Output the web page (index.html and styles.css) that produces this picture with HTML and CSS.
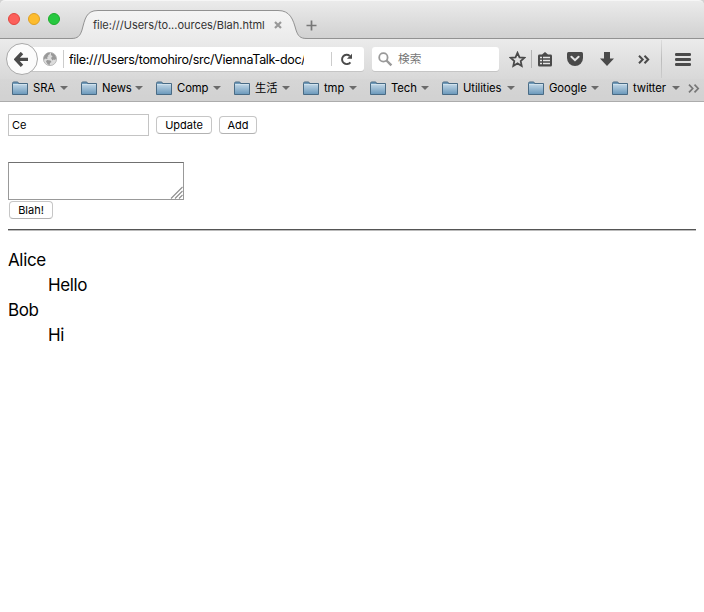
FILE: index.html
```html
<!DOCTYPE html>
<html lang="ja">
<head>
<meta charset="utf-8">
<title>Blah</title>
<link rel="stylesheet" href="styles.css">
</head>
<body>
<svg class="defs" width="0" height="0" aria-hidden="true">
  <defs>
    <linearGradient id="folderFill" x1="0" y1="0" x2="0" y2="1"><stop offset="0" stop-color="#b9d1e2"/><stop offset="1" stop-color="#6d9abc"/></linearGradient>
    <linearGradient id="tabFill" x1="0" y1="0" x2="0" y2="1"><stop offset="0" stop-color="#f5f5f5"/><stop offset="1" stop-color="#ebebeb"/></linearGradient>
    <symbol id="folder" viewBox="0 0 16 15">
      <path d="M.5 2.5Q.5 1 1.8 1H5.2Q6.5 1 6.5 2.5H15.5V13.5H.5Z" fill="#6f9aba" stroke="#496b85"/>
      <path d="M1 4H15V13H1Z" fill="url(#folderFill)"/>
      <path d="M1 3.5H15" stroke="#d0e1ec" stroke-width="1"/>
    </symbol>
  </defs>
</svg>
<header class="chrome">
  <div class="tabstrip">
    <div class="lights"><i class="red"></i><i class="yellow"></i><i class="green"></i></div>
    <div class="tab">
      <svg class="tab-shape" width="236" height="30" viewBox="0 0 236 30"><path d="M0 28.5C7 28.5 9 26 11 20C14 9 15 .5 27 .5H207C219 .5 222 9 225 20C227 26 229 28.5 236 28.5V30H0Z" fill="url(#tabFill)"/><path d="M0 28.5C7 28.5 9 26 11 20C14 9 15 .5 27 .5H207C219 .5 222 9 225 20C227 26 229 28.5 236 28.5" fill="none" stroke="#929292"/></svg>
      <span class="tab-title">file:///Users/to...ources/Blah.html</span>
      <svg class="tab-close" width="8" height="8" viewBox="0 0 8 8"><path d="M1 1L7 7M7 1L1 7" stroke="#999" stroke-width="2.2"/></svg>
    </div>
    <svg class="newtab" width="11" height="11" viewBox="0 0 11 11"><path d="M5.5 .5V10.5M.5 5.5H10.5" stroke="#777" stroke-width="1.7"/></svg>
  </div>
  <div class="navbar">
    <div class="back"><svg width="15" height="15" viewBox="0 0 15 15"><path d="M8 1L2 7.4L8 13.8M2 7.4H14" fill="none" stroke="#4a4a4a" stroke-width="3.4"/></svg></div>
    <div class="urlbar">
      <svg class="globe" width="14" height="14" viewBox="0 0 14 14"><circle cx="7" cy="7" r="6.6" fill="#dcdcdc" stroke="#b0b0b0" stroke-width=".8"/><path d="M.6 6C1.5 3 3.5 1 6.5 .6L7 2L5 3.2L5.5 4.2L4 5L4.8 6.2L3.5 7L2 6.5L1 8ZM8 .7C11 1.2 13 3.5 13.3 6.5L12 8L10.5 7.5L9.5 8.5L8 6L9.5 4.5L8 3ZM4 8L7.5 8.5L8.5 10L7 11L6.5 13.2L4.5 12L3 9.5Z" fill="#999"/></svg>
      <div class="url"><span>file:///Users/tomohiro/src/ViennaTalk-doc/</span></div>
      <div class="reload"><svg width="13" height="13" viewBox="0 0 12 12"><path d="M9.6 8.6A4.3 4.3 0 1 1 9 2.7" fill="none" stroke="#4a4a4a" stroke-width="1.8"/><path d="M11.1 .6V5.3H6.4Z" fill="#4a4a4a"/></svg></div>
    </div>
    <div class="search">
      <svg width="15" height="15" viewBox="0 0 15 15"><circle cx="5.4" cy="5.4" r="4.2" fill="none" stroke="#999" stroke-width="1.8"/><path d="M8.5 8.5L13.4 13.4" stroke="#999" stroke-width="2.4"/></svg>
      <span>検索</span>
    </div>
    <div class="tools">
      <svg class="t-star" width="17" height="17" viewBox="0 0 17 17"><path d="M8.5 1.8L10.5 6.3L15.3 6.8L11.7 10.1L12.7 15L8.5 12.4L4.3 15L5.3 10.1L1.7 6.8L6.5 6.3Z" fill="none" stroke="#4a4a4a" stroke-width="1.8"/></svg>
      <i class="rule"></i>
      <svg class="t-list" width="14" height="15" viewBox="0 0 14 15"><path d="M7 0L10 2.6H12.5Q14 2.6 14 4V13Q14 14.5 12.5 14.5H1.5Q0 14.5 0 13V4Q0 2.6 1.5 2.6H4Z" fill="#4a4a4a"/><path d="M2 5.5H4M5 5.5H12M2 8.5H4M5 8.5H12M2 11.5H4M5 11.5H12" stroke="#e4e4e4" stroke-width="1.3"/></svg>
      <svg class="t-pocket" width="16" height="14" viewBox="0 0 16 14"><path d="M1.5 0H14.5Q16 0 16 1.5V6A8 8 0 0 1 0 6V1.5Q0 0 1.5 0Z" fill="#4a4a4a"/><path d="M4.4 4.8L8 8.2L11.6 4.8" fill="none" stroke="#e4e4e4" stroke-width="2" stroke-linecap="round"/></svg>
      <svg class="t-down" width="14" height="14" viewBox="0 0 14 14"><path d="M4 0H10V6.5H14L7 14L0 6.5H4Z" fill="#4a4a4a"/></svg>
      <svg class="t-more" width="12" height="9" viewBox="0 0 12 9"><path d="M1 .7L4.7 4.5L1 8.3M6.5 .7L10.2 4.5L6.5 8.3" fill="none" stroke="#4a4a4a" stroke-width="2"/></svg>
      <i class="rule tall"></i>
      <svg class="t-menu" width="16" height="13" viewBox="0 0 16 13"><path d="M1.3 1.5H14.7M1.3 6.5H14.7M1.3 11.5H14.7" stroke="#4a4a4a" stroke-width="2.8" stroke-linecap="round"/></svg>
    </div>
  </div>
  <nav class="bookmarks">
    <div class="bm"><svg><use href="#folder"/></svg><span>SRA</span></div>
    <div class="bm"><svg><use href="#folder"/></svg><span>News</span></div>
    <div class="bm"><svg><use href="#folder"/></svg><span>Comp</span></div>
    <div class="bm"><svg><use href="#folder"/></svg><span>生活</span></div>
    <div class="bm"><svg><use href="#folder"/></svg><span>tmp</span></div>
    <div class="bm"><svg><use href="#folder"/></svg><span>Tech</span></div>
    <div class="bm"><svg><use href="#folder"/></svg><span>Utilities</span></div>
    <div class="bm"><svg><use href="#folder"/></svg><span>Google</span></div>
    <div class="bm"><svg><use href="#folder"/></svg><span>twitter</span></div>
    <svg class="overflow" width="12" height="9" viewBox="0 0 12 9"><path d="M1 .7L4.7 4.5L1 8.3M6.5 .7L10.2 4.5L6.5 8.3" fill="none" stroke="#777" stroke-width="1.7"/></svg>
  </nav>
</header>
<main>
  <div class="row"><input class="name" type="text" value="Ce"><button class="update">Update</button><button class="add">Add</button></div>
  <div class="message"><svg width="13" height="13" viewBox="0 0 13 13"><path d="M1 12.5L12.5 1M5 12.5L12.5 5M9 12.5L12.5 9" stroke="#8f8f8f" stroke-width="1.1"/></svg></div>
  <button class="blah">Blah!</button>
  <hr>
  <dl><dt>Alice</dt><dd>Hello</dd><dt>Bob</dt><dd>Hi</dd></dl>
</main>
</body>
</html>
```
FILE: styles.css
```css
* { box-sizing: border-box; }
body { margin: 0; width: 704px; height: 612px; overflow: hidden; background: #fff; color: #000; font-family: Inter, "Noto Sans CJK JP", sans-serif; }
svg { display: block; flex: none; }
.defs { position: absolute; }
.chrome { height: 102px; border-bottom: 1px solid #acacac; background: #d2d2d2; }
.tabstrip { height: 39px; display: flex; align-items: flex-start; background: linear-gradient(#ebebeb, #d1d1d1); border-top: 1px solid #f6f6f6; border-bottom: 1px solid #929292; border-radius: 5px 5px 0 0; }
.lights { display: flex; gap: 8px; padding: 12px 0 0 8px; width: 72px; }
.lights i { width: 12px; height: 12px; border-radius: 50%; border: 1px solid; }
.lights .red { background: #fc605b; border-color: #e2463f; }
.lights .yellow { background: #fdbc2e; border-color: #dfa023; }
.lights .green { background: #27c840; border-color: #1dad2c; }
.tab { position: relative; width: 233px; height: 30px; margin-top: 9px; display: flex; align-items: center; padding-left: 21px; }
.tab-shape { position: absolute; left: -1px; top: 0; }
.tab-title { position: relative; width: 180px; font-size: 11px; line-height: 14px; letter-spacing: -.02px; white-space: nowrap; color: #333; }
.tab-close { position: relative; margin-left: 1px; }
.newtab { margin: 19px 0 0 1px; }
.navbar { height: 40px; display: flex; align-items: center; background: linear-gradient(#ebebeb, #d8d8d8); padding-left: 6px; }
.back { position: relative; z-index: 1; width: 32px; height: 32px; flex: none; border: 1px solid #a9a9a9; border-radius: 50%; background: #fbfbfb; display: flex; align-items: center; padding-left: 7px; }
.urlbar { width: 334px; height: 24px; margin-left: -8px; flex: none; display: flex; align-items: center; background: #fff; border-radius: 0 3px 3px 0; padding-left: 13px; box-shadow: 0 1px #c5c5c5; }
.globe { margin-right: 6px; }
.url { width: 268px; height: 18px; padding-left: 5px; border-left: 1px solid #ccc; }
.url span { display: block; width: 235px; overflow: hidden; font-size: 12.5px; line-height: 19px; white-space: nowrap; letter-spacing: -.31px; }
.reload { height: 14px; padding-left: 8px; border-left: 1px solid #ccc; display: flex; align-items: center; }
.search { width: 127px; height: 24px; flex: none; margin-left: 8px; display: flex; align-items: center; gap: 5px; padding-left: 6px; background: #fff; border-radius: 3px; box-shadow: 0 1px #c5c5c5; font-size: 11.7px; line-height: 18px; color: #777; }
.search span { margin-top: -1px; }
.tools { display: flex; align-items: center; margin-left: 10px; height: 40px; }
.rule { width: 1px; height: 18px; background: #b4b4b4; margin: 0 6px 0 5px; }
.rule.tall { height: 38px; background: linear-gradient(#ddd, #bbb, #ccc); margin: 0 13px 0 11px; }
.t-pocket { margin-left: 15px; }
.t-down { margin-left: 17px; }
.t-more { margin-left: 24px; }
.bookmarks { display: grid; grid-template-columns: 69px 75px 78px 69px 67px 72px 86px 84px 76px 12px; align-items: center; padding-left: 12px; height: 18px; margin-bottom: 4px; background: linear-gradient(#d6d6d6, #d2d2d2); }
.bm { display: flex; align-items: center; height: 18px; font-size: 11.3px; line-height: 16px; letter-spacing: -.1px; white-space: nowrap; }
.bm svg { width: 16px; height: 15px; margin-right: 5px; }
.bm::after { content: ""; width: 8px; height: 4px; background: #6b6b6b; clip-path: polygon(0 0, 100% 0, 50% 100%); margin: 0 13px 0 auto; }
.bm:nth-child(9)::after { margin-right: 8px; }
main { padding: 12px 8px 0; }
button { height: 18px; padding: 0; border: 1px solid #c6c6c6; border-bottom-color: #b2b2b2; border-radius: 4px; background: #fff; color: #000; font: 11px/15px Inter, sans-serif; display: block; }
.row { display: flex; align-items: center; height: 22px; }
.name { width: 141px; height: 22px; border: 1px solid #c4c4c4; padding: 0 3px; font: 11px Inter, sans-serif; }
.update { width: 56px; margin-left: 7px; }
.add { width: 38px; margin-left: 7px; }
.message { width: 176px; height: 38px; margin-top: 26px; border: 1px solid #999; border-top-color: #707070; display: flex; align-items: flex-end; justify-content: flex-end; }
.blah { width: 44px; margin: 1px 0 0 1px; }
hr { height: 2px; margin: 10px 0 0; border: 0; border-top: 1px solid #555; background: #bbb; }
dl { margin: 17px 0 0; font-size: 17px; line-height: 25px; letter-spacing: -.36px; }
dd { margin: 0 0 0 40px; }
```
